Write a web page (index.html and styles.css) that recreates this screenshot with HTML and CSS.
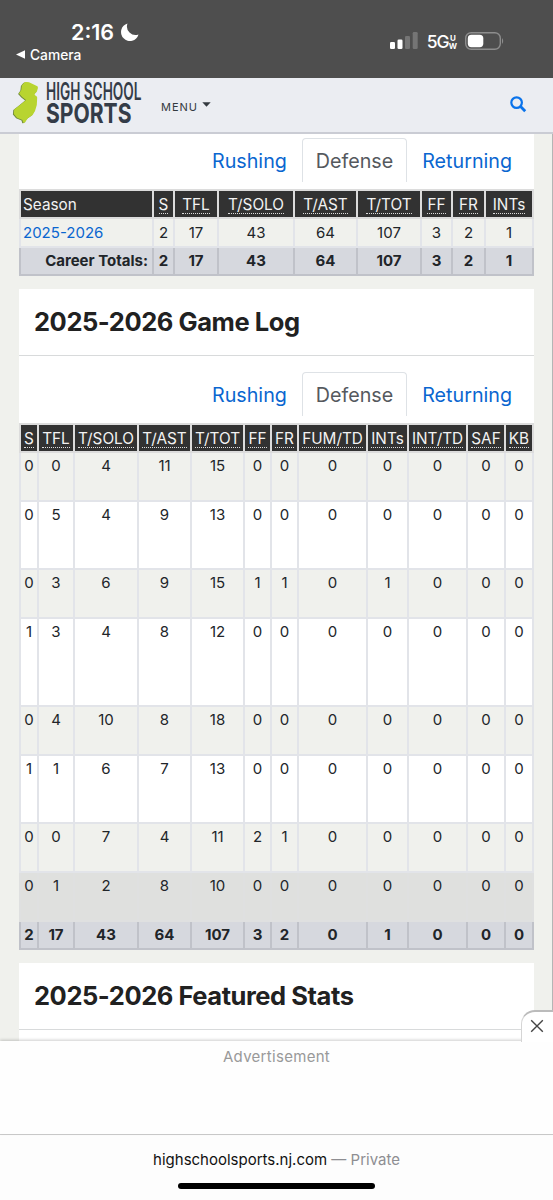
FILE: index.html
```html
<!DOCTYPE html>
<html lang="en">
<head>
    <meta charset="UTF-8">
    <meta name="viewport" content="width=device-width, initial-scale=1.0">
    <title>High School Sports</title>
    <link rel="stylesheet" href="styles.css">
</head>
<body>

    <!-- Phone status bar -->
    <div class="status-bar">
        <div class="status-left">
            <div class="clock">
                <span>2:16</span>
                <svg width="18" height="18" viewBox="0 0 18 18"><path d="M6.5 0.5 A8.9 8.9 0 1 0 17.5 11.5 A8.6 8.6 0 0 1 6.5 0.5Z" fill="#fff"/></svg>
            </div>
            <div class="back-link">
                <svg width="9" height="9" viewBox="0 0 9 9"><path d="M0 4.5 L9 0.3 V8.7Z" fill="#fff"/></svg>
                <span>Camera</span>
            </div>
        </div>
        <div class="status-right">
            <svg width="28" height="18" viewBox="0 0 28 18">
                <rect x="0" y="10" width="5" height="7" rx="1.3" fill="#fff"/>
                <rect x="7.5" y="7.5" width="5" height="9.5" rx="1.3" fill="#fff"/>
                <rect x="15" y="4" width="5" height="13" rx="1.3" fill="#757575"/>
                <rect x="22.7" y="0" width="5" height="17" rx="1.3" fill="#757575"/>
            </svg>
            <span class="network">5G</span>
            <span class="band"><span>U</span><span>W</span></span>
            <svg class="battery" width="40" height="18" viewBox="0 0 40 18">
                <rect x="0.7" y="0.7" width="34.6" height="16.6" rx="5.5" fill="none" stroke="#8d8d8d" stroke-width="1.4"/>
                <rect x="2.8" y="2.8" width="15.5" height="12.4" rx="3.6" fill="#fff"/>
                <path d="M37 6 Q39.4 9 37 12Z" fill="#8d8d8d"/>
            </svg>
        </div>
    </div>

    <!-- Site header -->
    <header class="site-header">
        <svg class="logo" width="132" height="48" viewBox="0 0 132 48">
            <g transform="translate(-12 -80)">
                <path transform="translate(-0.9 0.5)" fill="#6f8a3c" d="M23.8 84 Q24.5 83 26 83 L29 83.3 L37.4 87.2 Q38.2 88 37.8 89.5 L36.8 92.8 L34.6 95 Q34.3 96.3 36.6 97.2 L37.2 98.5 L36.8 106 L35 112 L32.6 116 L27.6 119.6 L25 123.6 L23.2 123.8 L22.4 121 L17 118.8 L13.8 115 L14.2 110.6 L20.6 105.5 L26 101 L22.2 98 L19 94.4 L21.3 91 L21.8 86.5Z"/>
                <path fill="#b8d430" d="M23.8 84 Q24.5 83 26 83 L29 83.3 L37.4 87.2 Q38.2 88 37.8 89.5 L36.8 92.8 L34.6 95 Q34.3 96.3 36.6 97.2 L37.2 98.5 L36.8 106 L35 112 L32.6 116 L27.6 119.6 L25 123.6 L23.2 123.8 L22.4 121 L17 118.8 L13.8 115 L14.2 110.6 L20.6 105.5 L26 101 L22.2 98 L19 94.4 L21.3 91 L21.8 86.5Z"/>
            </g>
            <text class="logo-top" x="34" y="20.6" textLength="95.5" lengthAdjust="spacingAndGlyphs">HIGH SCHOOL</text>
            <text class="logo-bottom" x="34" y="44.3" textLength="85.5" lengthAdjust="spacingAndGlyphs">SPORTS</text>
        </svg>
        <a class="menu" href="#">MENU
            <svg width="9" height="5" viewBox="0 0 9 5"><path d="M0.3 0.3 H8.7 L4.5 4.8Z" fill="#343a40"/></svg>
        </a>
        <svg class="search" width="17" height="17" viewBox="0 0 17 17" fill="none" stroke="#0a73eb">
            <circle cx="6.6" cy="6.6" r="5.3" stroke-width="2.2"/>
            <path d="M10.6 10.6 L15.2 15.2" stroke-width="2.8"/>
        </svg>
    </header>

    <main class="content">
        <!-- Career stats -->
        <section class="card career">
            <nav class="tabs">
                <a href="#">Rushing</a>
                <a href="#" class="active">Defense</a>
                <a href="#">Returning</a>
            </nav>
            <table class="stats">
                <colgroup>
                    <col class="w133"><col class="w21"><col class="w44"><col class="w76"><col class="w63"><col class="w64"><col class="w31"><col class="w33"><col class="w48">
                </colgroup>
                <thead>
                    <tr><th class="season">Season</th><th><abbr>S</abbr></th><th><abbr>TFL</abbr></th><th><abbr>T/SOLO</abbr></th><th><abbr>T/AST</abbr></th><th><abbr>T/TOT</abbr></th><th><abbr>FF</abbr></th><th><abbr>FR</abbr></th><th><abbr>INTs</abbr></th></tr>
                </thead>
                <tbody>
                    <tr class="odd line"><td class="season"><a href="#">2025-2026</a></td><td>2</td><td>17</td><td>43</td><td>64</td><td>107</td><td>3</td><td>2</td><td>1</td></tr>
                </tbody>
                <tfoot>
                    <tr><td class="label">Career Totals:</td><td>2</td><td>17</td><td>43</td><td>64</td><td>107</td><td>3</td><td>2</td><td>1</td></tr>
                </tfoot>
            </table>
        </section>

        <!-- Game log -->
        <section class="card">
            <h2>2025-2026 Game Log</h2>
            <nav class="tabs">
                <a href="#">Rushing</a>
                <a href="#" class="active">Defense</a>
                <a href="#">Returning</a>
            </nav>
            <table class="stats">
                <colgroup>
                    <col class="w18"><col class="w36"><col class="w64"><col class="w53"><col class="w53"><col class="w27"><col class="w27"><col class="w69"><col class="w41"><col class="w59"><col class="w38"><col class="w28">
                </colgroup>
                <thead>
                    <tr><th><abbr>S</abbr></th><th><abbr>TFL</abbr></th><th><abbr>T/SOLO</abbr></th><th><abbr>T/AST</abbr></th><th><abbr>T/TOT</abbr></th><th><abbr>FF</abbr></th><th><abbr>FR</abbr></th><th><abbr>FUM/TD</abbr></th><th><abbr>INTs</abbr></th><th><abbr>INT/TD</abbr></th><th><abbr>SAF</abbr></th><th><abbr>KB</abbr></th></tr>
                </thead>
                <tbody>
                    <tr class="odd two"><td>0</td><td>0</td><td>4</td><td>11</td><td>15</td><td>0</td><td>0</td><td>0</td><td>0</td><td>0</td><td>0</td><td>0</td></tr>
                    <tr class="three"><td>0</td><td>5</td><td>4</td><td>9</td><td>13</td><td>0</td><td>0</td><td>0</td><td>0</td><td>0</td><td>0</td><td>0</td></tr>
                    <tr class="odd two"><td>0</td><td>3</td><td>6</td><td>9</td><td>15</td><td>1</td><td>1</td><td>0</td><td>1</td><td>0</td><td>0</td><td>0</td></tr>
                    <tr class="four"><td>1</td><td>3</td><td>4</td><td>8</td><td>12</td><td>0</td><td>0</td><td>0</td><td>0</td><td>0</td><td>0</td><td>0</td></tr>
                    <tr class="odd two"><td>0</td><td>4</td><td>10</td><td>8</td><td>18</td><td>0</td><td>0</td><td>0</td><td>0</td><td>0</td><td>0</td><td>0</td></tr>
                    <tr class="three"><td>1</td><td>1</td><td>6</td><td>7</td><td>13</td><td>0</td><td>0</td><td>0</td><td>0</td><td>0</td><td>0</td><td>0</td></tr>
                    <tr class="odd two"><td>0</td><td>0</td><td>7</td><td>4</td><td>11</td><td>2</td><td>1</td><td>0</td><td>0</td><td>0</td><td>0</td><td>0</td></tr>
                    <tr class="hover"><td>0</td><td>1</td><td>2</td><td>8</td><td>10</td><td>0</td><td>0</td><td>0</td><td>0</td><td>0</td><td>0</td><td>0</td></tr>
                </tbody>
                <tfoot>
                    <tr><td>2</td><td>17</td><td>43</td><td>64</td><td>107</td><td>3</td><td>2</td><td>0</td><td>1</td><td>0</td><td>0</td><td>0</td></tr>
                </tfoot>
            </table>
        </section>

        <!-- Featured stats -->
        <section class="card featured">
            <h2>2025-2026 Featured Stats</h2>
        </section>
    </main>

    <!-- Sticky ad -->
    <aside class="ad">
        <button class="close" aria-label="Close">
            <svg width="14" height="14" viewBox="0 0 14 14"><path d="M1.2 1.2 L12.8 12.8 M12.8 1.2 L1.2 12.8" stroke="#444" stroke-width="1.4"/></svg>
        </button>
        <span>Advertisement</span>
    </aside>

    <!-- Browser address bar -->
    <footer class="address-bar">
        <p><span class="domain">highschoolsports.nj.com</span> <span class="private">— Private</span></p>
        <div class="home-indicator"></div>
    </footer>

</body>
</html>
```
FILE: styles.css
```css
* {
    box-sizing: border-box;
}

body {
    width: 553px;
    height: 1200px;
    margin: 0;
    display: flex;
    flex-direction: column;
    overflow: hidden;
    background-color: #f0f1ed;
    color: #212529;
    font-family: Inter, "Liberation Sans", sans-serif;
}

a {
    color: #0a66d0;
    text-decoration: none;
}

/* Status bar */
.status-bar {
    height: 78px;
    flex: none;
    display: flex;
    justify-content: space-between;
    background-color: #4e4e4e;
    color: #fff;
}

.clock {
    display: flex;
    align-items: center;
    gap: 7px;
    margin: 19px 0 0 71px;
    height: 25px;
    font-size: 21.5px;
    font-weight: 600;
}

.back-link {
    display: flex;
    align-items: center;
    gap: 5px;
    margin: 2px 0 0 16px;
    height: 18px;
    font-size: 13.8px;
    font-weight: 500;
    line-height: 16px;
    padding-bottom: 1px;
}

.status-right {
    display: flex;
    align-items: center;
    height: 18px;
    margin: 32px 48px 0 0;
}

.network {
    margin: 1px 0 0 9px;
    font-size: 17.5px;
    font-weight: 500;
    letter-spacing: -1px;
}

.band {
    display: flex;
    flex-direction: column;
    align-items: center;
    margin: 1px 8px 0 0;
    font-size: 8px;
    font-weight: 700;
    line-height: 8px;
}

/* Header */
.site-header {
    height: 56px;
    flex: none;
    display: flex;
    align-items: center;
    padding: 0 26px 2px 12px;
    background-color: #ebedf2;
    border-bottom: 2px solid #caccd4;
}

.logo {
    margin-top: -2px;
    overflow: visible;
}

.logo-top,
.logo-bottom {
    fill: #343c48;
}

.logo-top {
    font-size: 24px;
    font-weight: 600;
}

.logo-bottom {
    font-size: 27.5px;
    font-weight: 700;
}

.menu {
    display: flex;
    align-items: center;
    gap: 4px;
    margin: 5px 0 0 17px;
    color: #343a40;
    font-size: 11px;
    letter-spacing: 1px;
}

.menu svg {
    margin-bottom: 4px;
}

.search {
    margin-left: auto;
}

/* Page content */
.content {
    height: 907px;
    flex: none;
    padding: 0 18px 0 19px;
    overflow: hidden;
    border-right: 1px solid #b4b5b5;
}

.card {
    width: 515px;
    margin-bottom: 13px;
    background-color: #fff;
}

.featured {
    height: 90px;
}

h2 {
    height: 67px;
    margin: 0;
    padding-left: 15px;
    border-bottom: 1px solid #d8dadb;
    color: #212121;
    font-size: 25.5px;
    font-weight: 700;
    letter-spacing: -0.44px;
    line-height: 66px;
}

/* Tabs */
.tabs {
    display: flex;
    justify-content: flex-end;
    height: 67px;
    padding: 16px 7px 7px 0;
}

.career .tabs {
    height: 55px;
    padding-top: 4px;
}

.tabs a {
    height: 44px;
    padding: 0 15px;
    font-size: 19.7px;
    line-height: 46px;
}

.tabs .active {
    padding: 0 13px;
    border: 1px solid #dee2e6;
    border-bottom: 0;
    border-radius: 4px 4px 0 0;
    color: #55595e;
    line-height: 44px;
}

/* Stat tables */
.stats {
    width: 515px;
    table-layout: fixed;
    border-collapse: collapse;
    background-color: #fff;
    font-size: 15px;
    line-height: 20px;
    text-align: center;
}

.stats th,
.stats td {
    padding: 3px 0 0;
    border: 2px solid #e2e4e9;
    vertical-align: top;
    white-space: nowrap;
}

.stats thead tr,
.stats tfoot tr {
    height: 28px;
}

.stats th {
    padding-top: 4px;
    border-color: #dcdcdc;
    background-color: #323232;
    color: #f2f2f2;
    font-size: 15.3px;
    font-weight: 400;
}

.stats abbr {
    border-bottom: 1px dotted #ddd;
    line-height: 16px;
    display: inline-block;
}

.stats .season {
    padding-left: 2px;
    text-align: left;
}

.stats .label {
    padding-right: 4px;
    text-align: right;
}

.stats .odd td {
    background-color: #f0f1ed;
}

.career .stats .odd td {
    padding-top: 4px;
}

.stats .hover td {
    background-color: #dfe0de;
    border-color: #dfe0e0;
}

.stats tfoot td {
    background-color: #d6d8de;
    border-color: #d6d8de #c0c2c9 #c0c2c9;
    font-weight: 700;
}

.line { height: 29px; }
.two { height: 48.5px; }
.three { height: 68.5px; }
.four { height: 88.5px; }
.hover { height: 49px; }

.w18 { width: 18px; }
.w21 { width: 21px; }
.w27 { width: 27px; }
.w28 { width: 28px; }
.w31 { width: 31px; }
.w33 { width: 33px; }
.w36 { width: 36px; }
.w38 { width: 38px; }
.w41 { width: 41px; }
.w44 { width: 44px; }
.w48 { width: 48px; }
.w53 { width: 53px; }
.w59 { width: 59px; }
.w63 { width: 63px; }
.w64 { width: 64px; }
.w69 { width: 69px; }
.w76 { width: 76px; }
.w133 { width: 133px; }

/* Ad */
.ad {
    position: relative;
    height: 93px;
    flex: none;
    padding-top: 6px;
    background-color: #fefefe;
    box-shadow: 0 -1px 3px rgba(0, 0, 0, 0.2);
    color: #999;
    font-size: 15px;
    letter-spacing: 0.3px;
    text-align: center;
}

.close {
    position: absolute;
    top: -31px;
    right: 0;
    width: 32px;
    height: 32px;
    padding: 0 2px 0 0;
    border: 0;
    border-top: 2px solid #bbb;
    border-left: 1px solid #d5d5d5;
    border-radius: 14px 0 0 0;
    background-color: #fff;
}

/* Address bar */
.address-bar {
    height: 66px;
    flex: none;
    border-top: 1px solid #cfcfcf;
    background-color: #fdfdfd;
    text-align: center;
}

.address-bar p {
    margin: 15px 0 0;
    font-size: 15px;
    line-height: 20px;
}

.domain {
    color: #111;
}

.private {
    color: #8e8e92;
}

.home-indicator {
    width: 197px;
    height: 6px;
    margin: 13px auto 0;
    border-radius: 3px;
    background-color: #000;
}
```
